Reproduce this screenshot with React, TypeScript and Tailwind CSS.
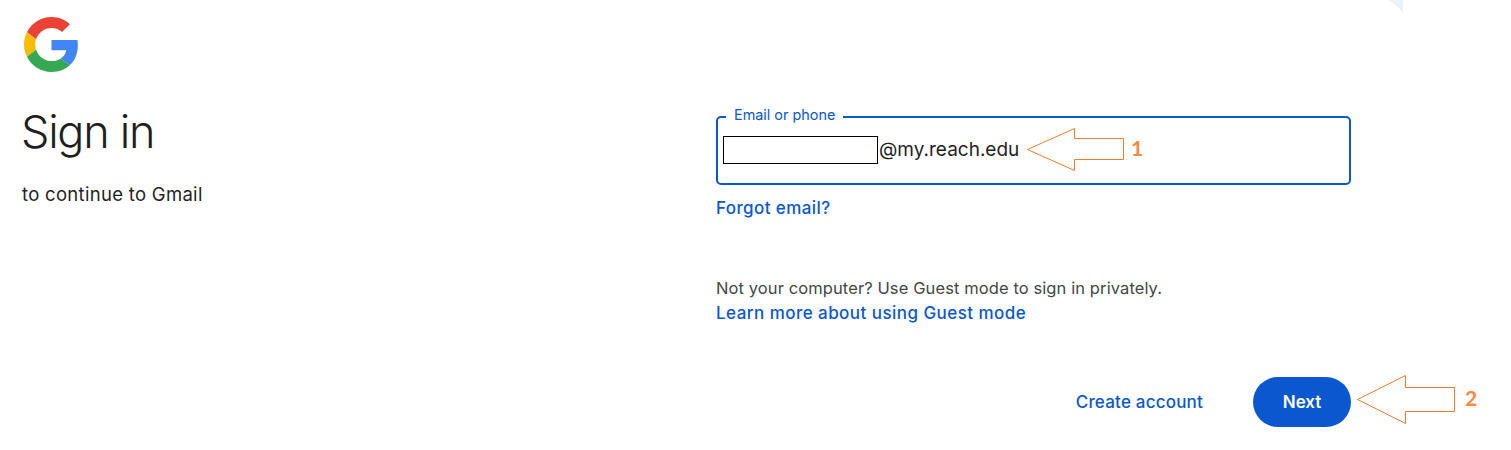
export default function App() {
  return (
    <div className="relative flex h-[450px] w-[1511px] overflow-hidden bg-white font-['Inter',sans-serif] text-[#1f1f1f]">
      <svg className="absolute left-[1388px] top-0 h-[14px] w-[15px]" viewBox="0 0 15 14">
        <path d="M0 0 C6 3 12 8 15 14 L15 0 Z" fill="#eef2f8" />
      </svg>

      <div className="w-[716px] shrink-0 pl-[22px] pt-[17px]">
        <svg className="ml-[1.5px] h-[55px] w-[55px]" viewBox="0 0 48 48">
          <path fill="#EA4335" d="M24 9.5c3.54 0 6.71 1.22 9.21 3.6l6.85-6.85C35.9 2.38 30.47 0 24 0 14.62 0 6.51 5.38 2.56 13.22l7.98 6.19C12.43 13.72 17.74 9.5 24 9.5z" />
          <path fill="#4285F4" d="M46.98 24.55c0-1.57-.15-3.09-.38-4.55H24v9.02h12.94c-.58 2.96-2.26 5.48-4.78 7.18l7.73 6c4.51-4.18 7.09-10.36 7.09-17.65z" />
          <path fill="#FBBC05" d="M10.53 28.59c-.48-1.45-.76-2.99-.76-4.59s.27-3.14.76-4.59l-7.98-6.19C.92 16.46 0 20.12 0 24c0 3.88.92 7.54 2.56 10.78l7.97-6.19z" />
          <path fill="#34A853" d="M24 48c6.48 0 11.93-2.13 15.89-5.81l-7.73-6c-2.15 1.45-4.92 2.3-8.16 2.3-6.26 0-11.57-4.22-13.47-9.91l-7.98 6.19C6.51 42.62 14.62 48 24 48z" />
        </svg>
        <h1 className="-ml-[1px] mt-[30px] text-[45px] font-light leading-[60px] tracking-[-1.3px]">Sign in</h1>
        <p className="mt-[18px] text-[18.5px] leading-[28px] tracking-[0.3px]">to continue to Gmail</p>
      </div>

      <div className="w-[635px] shrink-0 pt-[107px]">
        <fieldset className="h-[78px] rounded-[5px] border-2 border-[#0b57d0] pl-[5px] pr-[5px]">
          <legend className="ml-[3px] px-[8px] pb-[4px] text-[14.4px] leading-[16px] text-[#0b57d0]">Email or phone</legend>
          <div className="mt-[9px] flex items-center">
            <div className="h-[28px] w-[155px] border border-black" />
            <span className="ml-[1px] text-[19px] leading-[28px]">@my.reach.edu</span>
          </div>
        </fieldset>
        <a className="mt-[11px] block text-[17px] font-medium leading-[24px] tracking-[0.4px] text-[#0b57d0]">Forgot email?</a>
        <p className="mt-[56px] text-[16.5px] leading-[24px] tracking-[0.1px] text-[#444746]">Not your computer? Use Guest mode to sign in privately.</p>
        <a className="block text-[17px] font-medium leading-[26px] tracking-[0.45px] text-[#0b57d0]">Learn more about using Guest mode</a>
        <div className="mt-[51px] flex items-center justify-end">
          <a className="mr-[50px] pt-[2px] text-[17px] font-medium tracking-[0.2px] text-[#0b57d0]">Create account</a>
          <button className="h-[50px] w-[98px] rounded-full bg-[#0b57d0] pt-[2px] text-[17px] font-semibold text-white">Next</button>
        </div>
      </div>

      <svg className="pointer-events-none absolute left-0 top-0 h-[450px] w-[1511px]" viewBox="0 0 1511 450">
        <path d="M1027.5 149.5 L1074.5 128.5 V138.5 H1123.5 V159.5 H1074.5 V170.5 Z" fill="none" stroke="#ed7d31" strokeWidth="1" />
        <path d="M1357.5 399.5 L1405.5 375.5 V387.5 H1454.5 V411.5 H1405.5 V423.5 Z" fill="none" stroke="#ed7d31" strokeWidth="1" />
      </svg>
      <span className="absolute left-[1131px] top-[135px] font-['Lato',sans-serif] text-[21px] font-bold leading-[26px] text-[#f68b3f]">1</span>
      <span className="absolute left-[1465px] top-[385px] font-['Lato',sans-serif] text-[21px] font-bold leading-[26px] text-[#f68b3f]">2</span>
    </div>
  );
}
